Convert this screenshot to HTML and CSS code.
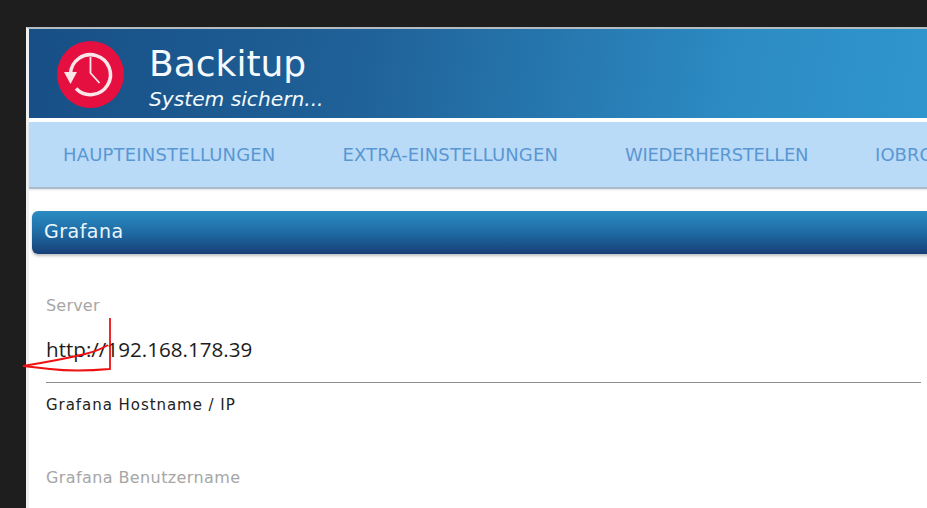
FILE: index.html
```html
<!DOCTYPE html>
<html lang="de">
<head>
<meta charset="utf-8">
<title>Backitup</title>
<link rel="stylesheet" href="styles.css">
</head>
<body>
<div class="window">
  <header class="banner">
    <svg class="logo" viewBox="0 0 68 68" aria-hidden="true">
      <circle cx="33.5" cy="33.5" r="33.5" fill="#e5103f"/>
      <path d="M13.5 33A20 20 0 1 1 19 47.5" fill="none" stroke="#fbe6ea" stroke-width="3.5"/>
      <path d="M7 31H20L13.5 43Z" fill="#fbe6ea"/>
      <path d="M33.5 16V32L42.5 42" fill="none" stroke="#fbe6ea" stroke-width="1.8"/>
    </svg>
    <div class="brand">
      <div class="brand-title">Backitup</div>
      <div class="brand-sub">System sichern...</div>
    </div>
  </header>
  <nav class="tabs">
    <span class="tab tab-main">HAUPTEINSTELLUNGEN</span>
    <span class="tab tab-extra">EXTRA-EINSTELLUNGEN</span>
    <span class="tab tab-restore">WIEDERHERSTELLEN</span>
    <span class="tab">IOBROKER</span>
  </nav>
  <main class="content">
    <h2 class="panel-title">Grafana</h2>
    <div class="field">
      <div class="field-label">Server</div>
      <div class="field-value">http://192.168.178.39</div>
      <div class="field-help">Grafana Hostname / IP</div>
    </div>
    <div class="field next">
      <div class="field-label">Grafana Benutzername</div>
    </div>
  </main>
</div>
<svg class="scribble" viewBox="0 0 927 508" aria-hidden="true">
  <path d="M110 318V369Q75 372 50 369L23 366Q60 360 85 354Q98 351 108 345" fill="none" stroke="#ee1111" stroke-width="1.8"/>
</svg>
</body>
</html>
```
FILE: styles.css
```css
* { box-sizing: border-box; }
html, body { margin: 0; height: 100%; }
body {
  width: 927px;
  height: 508px;
  overflow: hidden;
  background: #1e1e1e;
  padding: 27px 0 0 26px;
  position: relative;
  font-family: "DejaVu Sans", sans-serif;
}
.window {
  width: 1100px;
  height: 481px;
  background: #fff;
  border-top: 2px solid #b4bcc2;
  border-left: 3px solid #eef0f2;
}
.banner {
  height: 89px;
  display: flex;
  align-items: flex-start;
  padding: 12px 0 0 28px;
  background: linear-gradient(100deg, #174f85 0%, #1f6198 30%, #2d8cc4 65%, #3097cf 85%);
}
.logo { width: 68px; height: 68px; flex: none; }
.brand { margin-left: 24px; color: #f4fafd; }
.brand-title { font-size: 36px; line-height: 46px; }
.brand-sub { font-size: 20.2px; line-height: 24px; font-style: italic; }
.tabs {
  height: 67px;
  margin-top: 4px;
  display: flex;
  align-items: center;
  gap: 67px;
  padding-left: 34px;
  background: #b9dbf8;
  border-bottom: 2px solid #adbccd;
  box-shadow: 0 1px 2px rgba(0,0,0,.12);
  color: #5a97d2;
  font-size: 18px;
  white-space: nowrap;
}
.tab { flex: none; }
.tab-main { letter-spacing: .17px; }
.tab-extra { letter-spacing: .13px; }
.tab-restore { letter-spacing: -.33px; }
.content { padding: 22px 0 0 3px; }
.panel-title {
  margin: 0;
  height: 43px;
  width: 1000px;
  padding-left: 12px;
  border-radius: 6px 0 0 6px;
  background: linear-gradient(180deg, #2a8cc4 0%, #1f6ba4 50%, #173f78 100%);
  box-shadow: 0 2px 3px rgba(0,0,0,.25);
  color: #eaf6fc;
  font-size: 19px;
  letter-spacing: .5px;
  font-weight: 400;
  line-height: 41px;
}
.field { width: 875px; margin-left: 14px; }
.field-label { color: #a6a6a6; font-size: 16px; line-height: 20px; padding-top: 42px; letter-spacing: .2px; }
.field-value {
  height: 67px;
  padding-top: 18px;
  color: #1c1c1c;
  font-family: "Open Sans", sans-serif;
  font-size: 20.6px;
  line-height: 30px;
  border-bottom: 1px solid #8c8c8c;
}
.field-help { color: #222; font-size: 15px; letter-spacing: .95px; line-height: 20px; margin-top: 12px; }
.next .field-label { padding-top: 53px; letter-spacing: .4px; }
.scribble { position: absolute; left: 0; top: 0; width: 927px; height: 508px; }
```
